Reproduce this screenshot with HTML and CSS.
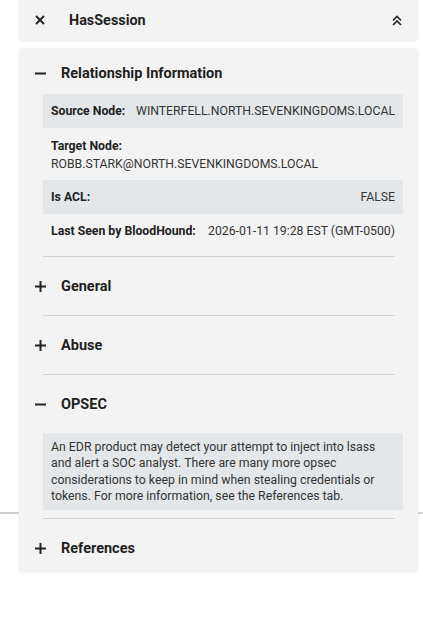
FILE: index.html
```html
<!DOCTYPE html>
<html lang="en">
<head>
  <meta charset="UTF-8">
  <meta name="viewport" content="width=device-width, initial-scale=1.0">
  <title>HasSession</title>
  <link rel="stylesheet" href="styles.css">
</head>
<body>
  <!-- graph canvas behind the panel -->
  <div class="canvas">
    <div class="edge-line"></div>
  </div>

  <div class="panel">
    <div class="panel-header">
      <svg class="icon-close" width="10" height="10" viewBox="0 0 10 10"><path d="M1 1 L9 9 M9 1 L1 9"/></svg>
      <span class="panel-title">HasSession</span>
      <svg class="icon-collapse" width="10" height="11" viewBox="0 0 10 11"><path d="M1 5.5 L5 1.5 L9 5.5 M1 10 L5 6 L9 10"/></svg>
    </div>

    <div class="panel-body">
      <div class="section">
        <div class="section-head">
          <svg class="icon-toggle" width="11" height="11" viewBox="0 0 11 11"><path d="M0 5.5 H11"/></svg>
          <span>Relationship Information</span>
        </div>
        <div class="props">
          <div class="prop shaded">
            <span class="prop-label">Source Node:</span>
            <span class="prop-value">WINTERFELL.NORTH.SEVENKINGDOMS.LOCAL</span>
          </div>
          <div class="prop stacked">
            <span class="prop-label">Target Node:</span>
            <span class="prop-value">ROBB.STARK@NORTH.SEVENKINGDOMS.LOCAL</span>
          </div>
          <div class="prop shaded">
            <span class="prop-label">Is ACL:</span>
            <span class="prop-value">FALSE</span>
          </div>
          <div class="prop">
            <span class="prop-label">Last Seen by BloodHound:</span>
            <span class="prop-value">2026-01-11 19:28 EST (GMT-0500)</span>
          </div>
        </div>
      </div>
      <hr class="divider">
      <div class="section">
        <div class="section-head">
          <svg class="icon-toggle" width="11" height="11" viewBox="0 0 11 11"><path d="M0 5.5 H11 M5.5 0 V11"/></svg>
          <span>General</span>
        </div>
      </div>
      <hr class="divider">
      <div class="section">
        <div class="section-head">
          <svg class="icon-toggle" width="11" height="11" viewBox="0 0 11 11"><path d="M0 5.5 H11 M5.5 0 V11"/></svg>
          <span>Abuse</span>
        </div>
      </div>
      <hr class="divider">
      <div class="section">
        <div class="section-head">
          <svg class="icon-toggle" width="11" height="11" viewBox="0 0 11 11"><path d="M0 5.5 H11"/></svg>
          <span>OPSEC</span>
        </div>
        <div class="note">
          An EDR product may detect your attempt to inject into lsass and alert a SOC analyst. There are many more opsec considerations to keep in mind when stealing credentials or tokens. For more information, see the References tab.
        </div>
      </div>
      <hr class="divider">
      <div class="section">
        <div class="section-head">
          <svg class="icon-toggle" width="11" height="11" viewBox="0 0 11 11"><path d="M0 5.5 H11 M5.5 0 V11"/></svg>
          <span>References</span>
        </div>
      </div>
    </div>
  </div>
</body>
</html>
```

FILE: styles.css
```css
body {
  margin: 0;
  background-color: #ffffff;
  font-family: Roboto, "Liberation Sans", sans-serif;
  color: #222;
  position: relative;
  min-height: 100vh;
}

.canvas {
  position: absolute;
  inset: 0;
  z-index: 0;
}

.edge-line {
  position: absolute;
  top: 512px;
  left: 0;
  width: 100%;
  height: 2px;
  background-color: #cfcfcf;
}

.panel {
  position: relative;
  z-index: 1;
  width: 399px;
  margin-left: 19px;
  display: flex;
  flex-direction: column;
  gap: 8px;
}

.panel-header,
.panel-body {
  background-color: #f3f3f3;
  box-shadow: 0 1px 3px rgba(0, 0, 0, 0.08);
}

.panel-header {
  height: 40px;
  display: flex;
  align-items: center;
  padding: 0 16px;
  border-radius: 0 0 4px 4px;
}

.panel-title {
  font-size: 14.4px;
  font-weight: 700;
  margin-left: 24px;
  flex: 1;
  color: #1f1f1f;
}

.icon-close path,
.icon-collapse path,
.icon-toggle path {
  fill: none;
  stroke: #222;
}

.icon-close path { stroke-width: 1.9; }
.icon-collapse path { stroke-width: 1.7; }
.icon-toggle path { stroke-width: 2; }

.panel-body {
  border-radius: 4px;
}

.section {
  padding: 8px 0;
}

.section:first-child { padding-top: 4px; }
.section:last-child { padding-bottom: 2px; }

.section-head {
  height: 42px;
  display: flex;
  align-items: center;
  gap: 15px;
  padding-left: 16px;
  font-size: 14.5px;
  font-weight: 700;
  color: #1f1f1f;
}

.divider {
  margin: 0 23px 0 24px;
  border: 0;
  border-top: 1px solid #d6d6d6;
}

.props {
  margin: 0 15px 0 24px;
  font-size: 12.25px;
  line-height: 18px;
}

.prop {
  display: flex;
  justify-content: space-between;
  gap: 10px;
  padding: 8px;
}

.prop.stacked {
  flex-direction: column;
  gap: 0;
  padding: 9px 8px 7px;
}

.prop.shaded {
  background-color: #e4e7e9;
}

.prop-label {
  font-weight: 700;
  color: #222;
  white-space: nowrap;
}

.prop-value {
  color: #333;
}

.note {
  margin: 8px 15px 0 24px;
  padding: 6px 8px;
  background-color: #e4e7e9;
  font-size: 12.3px;
  line-height: 16.25px;
  color: #333;
}
```
